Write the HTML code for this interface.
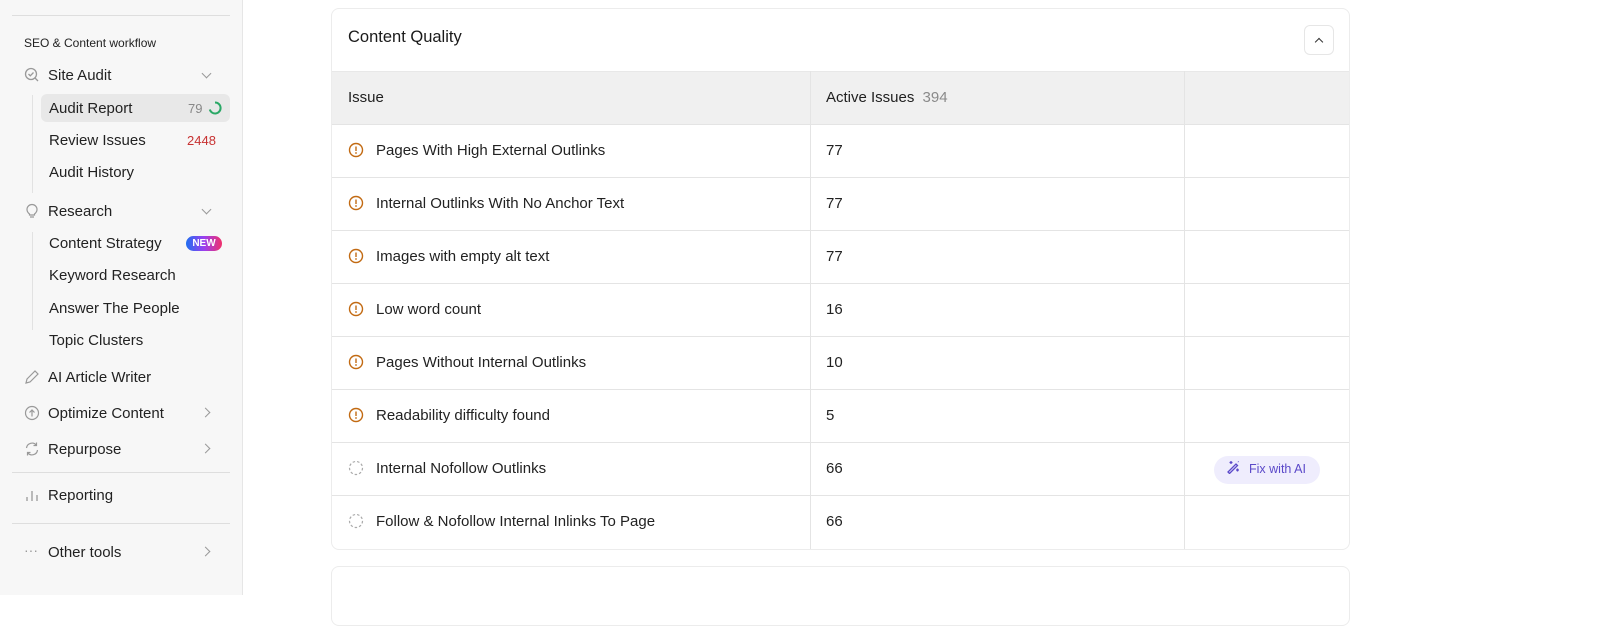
<!DOCTYPE html>
<html><head><style>
*{box-sizing:border-box;margin:0;padding:0}
body{width:1600px;height:595px;overflow:hidden;font-family:"Liberation Sans",sans-serif;background:#fff;position:relative;color:#1f1f1f}
.sb{position:absolute;left:0;top:0;width:243px;height:595px;background:#f7f7f7;border-right:1px solid #e6e6e6}
.hr{position:absolute;left:12px;width:218px;height:1px;background:#dedede}
.t{position:absolute;font-size:15px;color:#222;white-space:nowrap}
.ic{position:absolute}
.chev{position:absolute;left:203px;width:7px;height:7px;border-right:1.3px solid #999;border-bottom:1.3px solid #999}
.card{position:absolute;left:331px;width:1019px;border:1px solid #ececec;border-radius:8px;background:#fff;overflow:hidden}
.row{position:absolute;left:0;width:1019px;height:53px;border-top:1px solid #e4e4e4}
.row span{position:absolute;top:17px;font-size:15px;color:#222}
.row svg{top:17px!important}
.vl{position:absolute;top:62px;width:1px;height:478px;background:#e4e4e4}
</style></head><body>
<div class="sb">
<div class="hr" style="top:15px"></div>
<div class="t" style="left:24px;top:36px;font-size:12px;color:#222">SEO &amp; Content workflow</div>
<svg class="ic" style="left:24px;top:67px" width="16" height="16" viewBox="0 0 16 16" fill="none" stroke="#999" stroke-width="1.3"><circle cx="7" cy="7" r="5.5"/><path d="M4.5 7l1.8 1.8L9.5 5.5M11 11l3 3"/></svg>
<div class="t" style="left:48px;top:67px">Site Audit</div><div class="chev" style="top:70px;transform:rotate(45deg)"></div>
<div style="position:absolute;left:32px;top:95px;width:1px;height:98px;background:#e2e2e2"></div>
<div style="position:absolute;left:41px;top:94px;width:189px;height:28px;background:#e8e8e8;border-radius:6px"></div>
<div class="t" style="left:49px;top:100px">Audit Report</div>
<div class="t" style="left:188px;top:101px;font-size:13px;color:#888">79</div>
<svg class="ic" style="left:208px;top:101px" width="14" height="14" viewBox="0 0 14 14" fill="none"><path d="M7 1.5A5.5 5.5 0 1 1 1.8 8.5" stroke="#2aa866" stroke-width="2"/></svg>
<div class="t" style="left:49px;top:132px">Review Issues</div>
<div class="t" style="left:187px;top:133px;font-size:13px;color:#c83232">2448</div>
<div class="t" style="left:49px;top:164px">Audit History</div>
<svg class="ic" style="left:25px;top:203px" width="14" height="17" viewBox="0 0 14 17" fill="none" stroke="#999" stroke-width="1.2"><path d="M4.5 11C3 9.8 2 8.5 2 6.5a5 5 0 0 1 10 0c0 2-1 3.3-2.5 4.5V12h-5zM5 14h4"/></svg>
<div class="t" style="left:48px;top:203px">Research</div><div class="chev" style="top:206px;transform:rotate(45deg)"></div>
<div style="position:absolute;left:32px;top:232px;width:1px;height:98px;background:#e2e2e2"></div>
<div class="t" style="left:49px;top:235px">Content Strategy</div>
<div style="position:absolute;left:186px;top:236px;width:36px;height:15px;border-radius:8px;background:linear-gradient(90deg,#1f6ff0,#9b3ff0,#f0306a);color:#fff;font-size:10px;font-weight:bold;text-align:center;line-height:15px">NEW</div>
<div class="t" style="left:49px;top:267px">Keyword Research</div>
<div class="t" style="left:49px;top:300px">Answer The People</div>
<div class="t" style="left:49px;top:332px">Topic Clusters</div>
<svg class="ic" style="left:24px;top:369px" width="16" height="16" viewBox="0 0 16 16" fill="none" stroke="#999" stroke-width="1.2"><path d="M2 14l1-4 8-8 3 3-8 8z"/></svg>
<div class="t" style="left:48px;top:369px">AI Article Writer</div>
<svg class="ic" style="left:24px;top:405px" width="16" height="16" viewBox="0 0 16 16" fill="none" stroke="#999" stroke-width="1.2"><circle cx="8" cy="8" r="6.5"/><path d="M8 11.5V5M5.5 7.5L8 5l2.5 2.5"/></svg>
<div class="t" style="left:48px;top:405px">Optimize Content</div><div class="chev" style="top:409px;left:202px;transform:rotate(-45deg)"></div>
<svg class="ic" style="left:24px;top:441px" width="16" height="16" viewBox="0 0 16 16" fill="none" stroke="#999" stroke-width="1.2"><path d="M2.5 7a5.5 5.5 0 0 1 10-2.5M13.5 9a5.5 5.5 0 0 1-10 2.5M12.5 1.5v3h-3M3.5 14.5v-3h3"/></svg>
<div class="t" style="left:48px;top:441px">Repurpose</div><div class="chev" style="top:445px;left:202px;transform:rotate(-45deg)"></div>
<div class="hr" style="top:472px"></div>
<svg class="ic" style="left:25px;top:488px" width="14" height="14" viewBox="0 0 14 14" stroke="#999" stroke-width="1.3"><path d="M2 13V9M7 13V3M12 13V7"/></svg>
<div class="t" style="left:48px;top:487px">Reporting</div>
<div class="hr" style="top:523px"></div>
<div class="t" style="left:24px;top:542px;color:#999;font-size:14px">···</div>
<div class="t" style="left:48px;top:544px">Other tools</div><div class="chev" style="top:548px;left:202px;transform:rotate(-45deg)"></div>
</div>

<div class="card" style="top:8px;height:542px">
<div style="position:absolute;left:16px;top:19px;font-size:16.5px;color:#1a1a1a">Content Quality</div>
<div style="position:absolute;left:972px;top:16px;width:30px;height:30px;border:1px solid #e6e6e6;border-radius:6px"></div>
<div style="position:absolute;left:984px;top:30px;width:6px;height:6px;border-left:1.4px solid #333;border-top:1.4px solid #333;transform:rotate(45deg)"></div>
<div style="position:absolute;left:0;top:62px;width:1019px;height:53px;background:#f0f0f0;border-top:1px solid #e8e8e8"></div>
<div style="position:absolute;left:16px;top:80px;font-size:15px">Issue</div>
<div style="position:absolute;left:494px;top:80px;font-size:15px">Active Issues <span style="color:#8a8a8a;margin-left:4px">394</span></div>
<div class="vl" style="left:478px"></div><div class="vl" style="left:852px"></div>

<div class="row" style="top:115px"><svg style="position:absolute;left:16px;top:19px" width="16" height="16" viewBox="0 0 16 16"><circle cx="8" cy="8" r="6.5" fill="none" stroke="#c26a12" stroke-width="1.4"/><path d="M8 4.5v4.5" stroke="#c26a12" stroke-width="1.4"/><circle cx="8" cy="11" r=".9" fill="#c26a12"/></svg><span style="left:44px">Pages With High External Outlinks</span><span style="left:494px">77</span></div>
<div class="row" style="top:168px"><svg style="position:absolute;left:16px;top:19px" width="16" height="16" viewBox="0 0 16 16"><circle cx="8" cy="8" r="6.5" fill="none" stroke="#c26a12" stroke-width="1.4"/><path d="M8 4.5v4.5" stroke="#c26a12" stroke-width="1.4"/><circle cx="8" cy="11" r=".9" fill="#c26a12"/></svg><span style="left:44px">Internal Outlinks With No Anchor Text</span><span style="left:494px">77</span></div>
<div class="row" style="top:221px"><svg style="position:absolute;left:16px;top:19px" width="16" height="16" viewBox="0 0 16 16"><circle cx="8" cy="8" r="6.5" fill="none" stroke="#c26a12" stroke-width="1.4"/><path d="M8 4.5v4.5" stroke="#c26a12" stroke-width="1.4"/><circle cx="8" cy="11" r=".9" fill="#c26a12"/></svg><span style="left:44px">Images with empty alt text</span><span style="left:494px">77</span></div>
<div class="row" style="top:274px"><svg style="position:absolute;left:16px;top:19px" width="16" height="16" viewBox="0 0 16 16"><circle cx="8" cy="8" r="6.5" fill="none" stroke="#c26a12" stroke-width="1.4"/><path d="M8 4.5v4.5" stroke="#c26a12" stroke-width="1.4"/><circle cx="8" cy="11" r=".9" fill="#c26a12"/></svg><span style="left:44px">Low word count</span><span style="left:494px">16</span></div>
<div class="row" style="top:327px"><svg style="position:absolute;left:16px;top:19px" width="16" height="16" viewBox="0 0 16 16"><circle cx="8" cy="8" r="6.5" fill="none" stroke="#c26a12" stroke-width="1.4"/><path d="M8 4.5v4.5" stroke="#c26a12" stroke-width="1.4"/><circle cx="8" cy="11" r=".9" fill="#c26a12"/></svg><span style="left:44px">Pages Without Internal Outlinks</span><span style="left:494px">10</span></div>
<div class="row" style="top:380px"><svg style="position:absolute;left:16px;top:19px" width="16" height="16" viewBox="0 0 16 16"><circle cx="8" cy="8" r="6.5" fill="none" stroke="#c26a12" stroke-width="1.4"/><path d="M8 4.5v4.5" stroke="#c26a12" stroke-width="1.4"/><circle cx="8" cy="11" r=".9" fill="#c26a12"/></svg><span style="left:44px">Readability difficulty found</span><span style="left:494px">5</span></div>
<div class="row" style="top:433px"><svg style="position:absolute;left:16px;top:19px" width="16" height="16" viewBox="0 0 16 16"><circle cx="8" cy="8" r="6.5" fill="none" stroke="#aaa" stroke-width="1.2" stroke-dasharray="2.5 2"/></svg><span style="left:44px">Internal Nofollow Outlinks</span><span style="left:494px">66</span>
<div style="position:absolute;left:882px;top:13px;width:106px;height:28px;border-radius:14px;background:#efedfd"></div>
<svg style="position:absolute;left:894px;top:20px" width="14" height="14" viewBox="0 0 14 14" fill="none" stroke="#5b49c9" stroke-width="1.3"><path d="M2 12L10 4l1.5 1.5-8 8zM5 1v3M3.5 2.5h3M11.5 8.5v3M10 10h3M12 1.5l.5.5"/></svg>
<span style="left:917px;top:19px;font-size:12.5px;color:#5b49c9">Fix with AI</span></div>
<div class="row" style="top:486px"><svg style="position:absolute;left:16px;top:19px" width="16" height="16" viewBox="0 0 16 16"><circle cx="8" cy="8" r="6.5" fill="none" stroke="#aaa" stroke-width="1.2" stroke-dasharray="2.5 2"/></svg><span style="left:44px">Follow &amp; Nofollow Internal Inlinks To Page</span><span style="left:494px">66</span></div>
</div>
<div class="card" style="top:566px;height:60px"></div>
</body></html>
